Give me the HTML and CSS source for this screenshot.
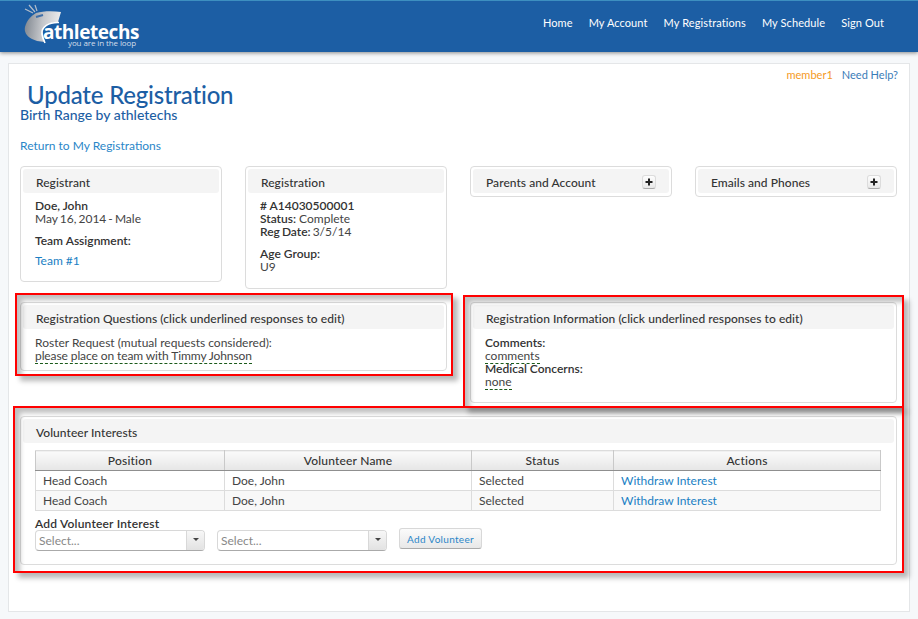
FILE: index.html
```html
<!DOCTYPE html>
<html lang="en">
<head>
<meta charset="utf-8">
<title>Update Registration</title>
<link rel="stylesheet" href="styles.css">
</head>
<body>
<header class="topbar">
  <a class="logo" href="#">
    <svg class="whistle" viewBox="0 0 42 44" width="42" height="44" aria-hidden="true">
      <defs>
        <linearGradient id="wg" x1="0" y1="0.2" x2="1" y2="0.3">
          <stop offset="0" stop-color="#7f868f"/>
          <stop offset="0.5" stop-color="#c4c6ca"/>
          <stop offset="1" stop-color="#eeeeee"/>
        </linearGradient>
      </defs>
      <path d="M2 5 L10 9 M6 1 L12 8 M12 1 L14 7" stroke="#b4bdca" stroke-width="1.2" fill="none"/>
      <path d="M13 9 C20 7 30 7 38 8 L35 18 C26 18 19 23 20 29 C20 32 21 35 22 38 L14 37 L9 35 C3 32 1 27 2 23 C4 16 8 12 13 9Z" fill="url(#wg)"/>
      <path d="M13 13 L20 11" stroke="#3f6fa8" stroke-width="2"/>
      <path d="M36 18.500 C26 18 18 23 19 30 C19.500 33 20.500 36 22 39" stroke="#fff" stroke-width="1.6" fill="none"/>
    </svg>
    <span class="logo-name">athletechs</span>
    <span class="logo-tag">you are in the loop</span>
  </a>
  <nav class="nav">
    <a href="#">Home</a>
    <a href="#">My Account</a>
    <a href="#">My Registrations</a>
    <a href="#">My Schedule</a>
    <a href="#">Sign Out</a>
  </nav>
</header>

<main class="page">
  <div class="userline">
    <span class="member">member1</span>
    <a href="#" class="help">Need Help?</a>
  </div>
  <h1>Update Registration</h1>
  <h2>Birth Range by athletechs</h2>
  <p class="back"><a href="#">Return to My Registrations</a></p>

  <div class="panels">
    <section class="panel">
      <h3 class="bar">Registrant</h3>
      <div class="body top tight">
        <div><b>Doe, John</b></div>
        <div class="narrow">May 16, 2014 - Male</div>
        <div class="gap"><b>Team Assignment:</b></div>
        <div class="gap-sm"><a href="#">Team #1</a></div>
      </div>
    </section>
    <section class="panel">
      <h3 class="bar">Registration</h3>
      <div class="body top">
        <div><b># A14030500001</b></div>
        <div><b>Status:</b> Complete</div>
        <div class="narrow"><b>Reg Date:</b> 3/5/14</div>
        <div class="gap"><b>Age Group:</b></div>
        <div>U9</div>
      </div>
    </section>
    <section class="panel">
      <h3 class="bar">Parents and Account<span class="plus"><svg viewBox="0 0 8 8" width="8" height="8"><path d="M4 .5V7.5M.5 4H7.5" stroke="#222" stroke-width="2"/></svg></span></h3>
    </section>
    <section class="panel">
      <h3 class="bar">Emails and Phones<span class="plus"><svg viewBox="0 0 8 8" width="8" height="8"><path d="M4 .5V7.5M.5 4H7.5" stroke="#222" stroke-width="2"/></svg></span></h3>
    </section>

    <section class="panel span2">
      <h3 class="bar">Registration Questions (click underlined responses to edit)</h3>
      <div class="body short">
        <div>Roster Request (mutual requests considered):</div>
        <div><span class="edit edit-long">please place on team with Timmy Johnson</span></div>
      </div>
    </section>
    <section class="panel span2">
      <h3 class="bar">Registration Information (click underlined responses to edit)</h3>
      <div class="body short info">
        <div><b>Comments:</b></div>
        <div><span class="edit">comments</span></div>
        <div><b>Medical Concerns:</b></div>
        <div><span class="edit">none</span></div>
      </div>
    </section>

    <section class="panel span4">
      <h3 class="bar">Volunteer Interests</h3>
      <div class="vol">
        <table class="grid">
          <thead>
            <tr><th class="c1">Position</th><th class="c2">Volunteer Name</th><th class="c3">Status</th><th>Actions</th></tr>
          </thead>
          <tbody>
            <tr><td>Head Coach</td><td>Doe, John</td><td>Selected</td><td><a href="#">Withdraw Interest</a></td></tr>
            <tr class="alt"><td>Head Coach</td><td>Doe, John</td><td>Selected</td><td><a href="#">Withdraw Interest</a></td></tr>
          </tbody>
        </table>
        <div class="add-label">Add Volunteer Interest</div>
        <div class="add-row">
          <div class="select"><span class="ph">Select...</span><span class="arrow"></span></div>
          <div class="select"><span class="ph">Select...</span><span class="arrow"></span></div>
          <button class="btn" type="button">Add Volunteer</button>
        </div>
      </div>
    </section>
  </div>
</main>

<div class="mark mark-a"></div>
<div class="mark mark-b"></div>
<div class="mark mark-c"></div>
</body>
</html>
```
FILE: styles.css
```css
* { box-sizing: border-box; }
html, body { margin: 0; padding: 0; }
body {
  position: relative;
  height: 619px;
  overflow: hidden;
  background: #f6f8fa;
  font: 12px/13px Lato, "Open Sans", sans-serif;
  color: #444;
}
a { color: #1b7fc4; text-decoration: none; }

.topbar {
  height: 52px;
  background: #1c5ea4;
  border-top: 1px solid #3d8fc0;
  box-shadow: 0 1px 4px rgba(0,0,0,.45);
  display: flex;
  justify-content: space-between;
  padding: 0 34px 0 23px;
}
.logo { position: relative; display: block; width: 125px; }
.whistle { position: absolute; left: 0; top: 3px; overflow: visible; }
.logo-name {
  position: absolute; left: 20px; top: 20px;
  font: bold 19px/22px "Open Sans", sans-serif;
  letter-spacing: -.45px;
  color: #fff;
}
.logo-tag {
  position: absolute; left: 45px; top: 37px;
  font: 8px/9px "Open Sans", sans-serif;
  letter-spacing: -.1px;
  color: #d4deeb;
}
.nav { display: flex; gap: 16px; padding-top: 15px; }
.nav a { color: #fff; font-size: 11px; letter-spacing: .1px; line-height: 13px; white-space: nowrap; }

.page {
  position: relative;
  margin: 11px 8px 0;
  height: 549px;
  background: #fff;
  border: 1px solid #e4e6e8;
  padding: 0 12px 0 11px;
}
.userline {
  position: absolute;
  right: 11px; top: 4px;
  display: flex; gap: 9px;
  font-size: 11px;
}
.member { color: #f59a23; }
.help { color: #3a7cb8; }
h1 {
  margin: 0;
  padding: 18px 0 0 7px;
  font-size: 24px;
  line-height: 26px;
  letter-spacing: -.2px;
  font-weight: 500;
  color: #1c5ea4;
}
h2 {
  margin: -1px 0 0;
  font-size: 14px;
  line-height: 16px;
  font-weight: 500;
  color: #1c5ea4;
}
.back { margin: 16px 0 0; font-size: 12px; line-height: 14px; }
.back a { color: #2a86c8; }

.panels {
  margin-top: 13px;
  display: grid;
  grid-template-columns: repeat(4, 202px);
  column-gap: 23px;
  row-gap: 13px;
  align-items: start;
}
.panel {
  background: #fff;
  border: 1px solid #dcdcdc;
  border-radius: 4px;
  padding: 2px 2px 3px;
}
.span2 { grid-column: span 2; }
.span4 { grid-column: span 4; }
.bar {
  position: relative;
  margin: 0;
  height: 24px;
  padding: 0 13px;
  background: #f4f4f4;
  border-radius: 3px;
  font-size: 12px;
  line-height: 27px;
  letter-spacing: .05px;
  font-weight: 500;
  color: #333;
}
.plus {
  position: absolute;
  right: 13px; top: 6px;
  width: 14px; height: 14px;
  background: linear-gradient(#fdfdfd, #e8e8e8);
  border: 1px solid #dcdcdc;
  border-bottom-color: #aaa;
  border-radius: 3px;
  display: flex; align-items: center; justify-content: center;
}
.body { padding: 7px 12px 12px; }
.top { padding-top: 6px; }
.tight { padding-bottom: 11px; }
.body b { font-weight: 600; color: #333; }
.narrow { word-spacing: -1px; }
.gap { margin-top: 9px; }
.gap-sm { margin-top: 7px; }
.short { padding-bottom: 5px; }
.info { padding-bottom: 11px; }
.edit { border-bottom: 1px dashed #1a5a1a; color: #444; }
.edit-long { letter-spacing: -.1px; }

.vol { padding: 7px 12px 10px; }
.grid {
  width: 846px;
  border-collapse: collapse;
  table-layout: fixed;
  font-size: 12px;
}
.grid th, .grid td { border: 1px solid #dcdcdc; height: 20px; padding: 0 7px; text-align: left; font-weight: 400; }
.grid th {
  background: linear-gradient(#fafafa, #e6e6e6);
  border-color: #dcdcdc #c9c9c9 #8f8f8f;
  text-align: center;
  font-weight: 500;
  color: #333;
  letter-spacing: .2px;
}
.c1 { width: 189px; }
.c2 { width: 247px; }
.c3 { width: 142px; }
.alt td { background: #f8f8f8; }

.add-label { margin-top: 7px; font-weight: 600; color: #333; line-height: 12px; letter-spacing: .2px; }
.add-row { display: flex; align-items: flex-start; gap: 12px; }
.select {
  position: relative;
  width: 170px; height: 21px;
  border: 1px solid #d8d8d8;
  border-bottom-color: #aaa;
  border-radius: 4px;
  background: #fff;
  padding: 3px 3px;
}
.ph { color: #888; }
.arrow {
  position: absolute; right: 0; top: 0; bottom: 0;
  width: 18px;
  background: linear-gradient(#f7f7f7, #e2e2e2);
  border-left: 1px solid #d8d8d8;
  border-radius: 0 3px 3px 0;
}
.arrow::after {
  content: "";
  position: absolute; left: 6px; top: 7px;
  border: 3px solid transparent;
  border-top: 3px solid #444;
  border-bottom: 0;
}
.btn {
  margin: -2px 0 0;
  width: 83px; height: 21px;
  padding: 0;
  background: linear-gradient(#fbfbfb, #e8e8e8);
  border: 1px solid #d8d8d8;
  border-bottom-color: #aaa;
  border-radius: 3px;
  font: 10px Lato, sans-serif;
  letter-spacing: .3px;
  color: #2a86c8;
}

.mark {
  position: absolute;
  border: 2px solid #f00;
  box-shadow: 5px 5px 5px rgba(0,0,0,.28), inset 5px 5px 5px rgba(0,0,0,.25);
}
.mark-a { left: 15px; top: 293px; width: 438px; height: 83px; }
.mark-b { left: 463px; top: 295px; width: 441px; height: 113px; }
.mark-c { left: 13px; top: 406px; width: 891px; height: 167px; }
```
